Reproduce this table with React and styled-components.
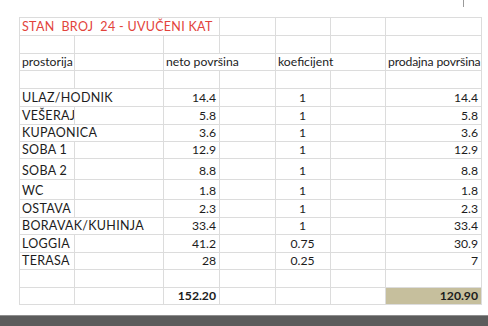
import React from "react";
import styled, { createGlobalStyle } from "styled-components";

const GlobalStyle = createGlobalStyle`
	html, body {
		margin: 0;
		padding: 0;
		background: #ffffff;
	}
	body {
		font-family: Lato, "Liberation Sans", sans-serif;
	}
`;

const Page = styled.div`
	width: 488px;
	height: 326px;
	display: flex;
	flex-direction: column;
	overflow: hidden;
	background: #ffffff;
`;

const TopStrip = styled.div`
	height: 17px;
	display: flex;
	padding-left: 463px;
`;

const Tick = styled.div`
	width: 1px;
	height: 7px;
	background: #9a9a9a;
`;

const Sheet = styled.div`
	flex: 1;
	padding-left: 19px;
`;

const Table = styled.table`
	border-collapse: collapse;
	table-layout: fixed;
	width: 462px;
	font-size: 12.2px;
	color: #1c1c1c;
`;

const Col = styled.col`
	width: ${(p) => p.$w}px;
`;

const Row = styled.tr`
	height: ${(p) => p.$h}px;
`;

const Cell = styled.td`
	border: 1px solid #dcdcdc;
	padding: 0 ${(p) => (p.$tight ? 0 : 3)}px 1px 2px;
	vertical-align: bottom;
	line-height: 15px;
	white-space: nowrap;
	overflow: hidden;
	letter-spacing: ${(p) => (p.$tight ? "-0.15px" : "normal")};
	text-align: ${(p) => p.$align || "left"};
	font-weight: ${(p) => (p.$bold ? 700 : 400)};
	color: ${(p) => (p.$red ? "#e2433b" : "inherit")};
	background: ${(p) => p.$fill || "transparent"};
`;

const Caps = styled.span`
	font-size: 12.5px;
	letter-spacing: 0.3px;
`;

const BottomBar = styled.div`
	height: 10px;
	background: #5c5c5c;
	border-top: 1px solid #8e8e8e;
`;

const widths = [55, 89, 56, 56, 55, 55, 96];

const rooms = [
	{ name: "ULAZ/HODNIK", wide: true, neto: "14.4", k: "1", prod: "14.4", h: 18 },
	{ name: "VEŠERAJ", neto: "5.8", k: "1", prod: "5.8", h: 18 },
	{ name: "KUPAONICA", wide: true, neto: "3.6", k: "1", prod: "3.6", h: 17 },
	{ name: "SOBA 1", neto: "12.9", k: "1", prod: "12.9", h: 17 },
	{ name: "SOBA 2", neto: "8.8", k: "1", prod: "8.8", h: 21 },
	{ name: "WC", neto: "1.8", k: "1", prod: "1.8", h: 20 },
	{ name: "OSTAVA", neto: "2.3", k: "1", prod: "2.3", h: 18 },
	{ name: "BORAVAK/KUHINJA", wide: true, neto: "33.4", k: "1", prod: "33.4", h: 17 },
	{ name: "LOGGIA", neto: "41.2", k: "0.75", prod: "30.9", h: 18 },
	{ name: "TERASA", neto: "28", k: "0.25", prod: "7", h: 17 },
];

function EmptyRow({ h }) {
	return (
		<Row $h={h}>
			{widths.map((w, i) => (
				<Cell key={i} />
			))}
		</Row>
	);
}

export default function App() {
	return (
		<Page>
			<GlobalStyle />
			<TopStrip>
				<Tick />
			</TopStrip>
			<Sheet>
				<Table>
					<colgroup>
						{widths.map((w, i) => (
							<Col key={i} $w={w} />
						))}
					</colgroup>
					<tbody>
						<Row $h={18}>
							<Cell colSpan={3} $red>
								<Caps>STAN&nbsp; BROJ&nbsp; 24 - UVUČENI KAT</Caps>
							</Cell>
							<Cell />
							<Cell />
							<Cell />
							<Cell />
						</Row>
						<EmptyRow h={18} />
						<Row $h={17}>
							<Cell>prostorija</Cell>
							<Cell />
							<Cell colSpan={2}>neto površina</Cell>
							<Cell colSpan={2}>koeficijent</Cell>
							<Cell $tight>prodajna površina</Cell>
						</Row>
						<EmptyRow h={18} />
						{rooms.map((r) => (
							<Row key={r.name} $h={r.h}>
								{r.wide ? (
									<Cell colSpan={2}>
										<Caps>{r.name}</Caps>
									</Cell>
								) : (
									<>
										<Cell>
											<Caps>{r.name}</Caps>
										</Cell>
										<Cell />
									</>
								)}
								<Cell $align="right">{r.neto}</Cell>
								<Cell />
								<Cell $align="center">{r.k}</Cell>
								<Cell />
								<Cell $align="right">{r.prod}</Cell>
							</Row>
						))}
						<EmptyRow h={18} />
						<Row $h={17}>
							<Cell />
							<Cell />
							<Cell $align="right" $bold>
								152.20
							</Cell>
							<Cell />
							<Cell />
							<Cell />
							<Cell $align="right" $bold $fill="#c6bf9d">
								120.90
							</Cell>
						</Row>
					</tbody>
				</Table>
			</Sheet>
			<BottomBar />
		</Page>
	);
}
